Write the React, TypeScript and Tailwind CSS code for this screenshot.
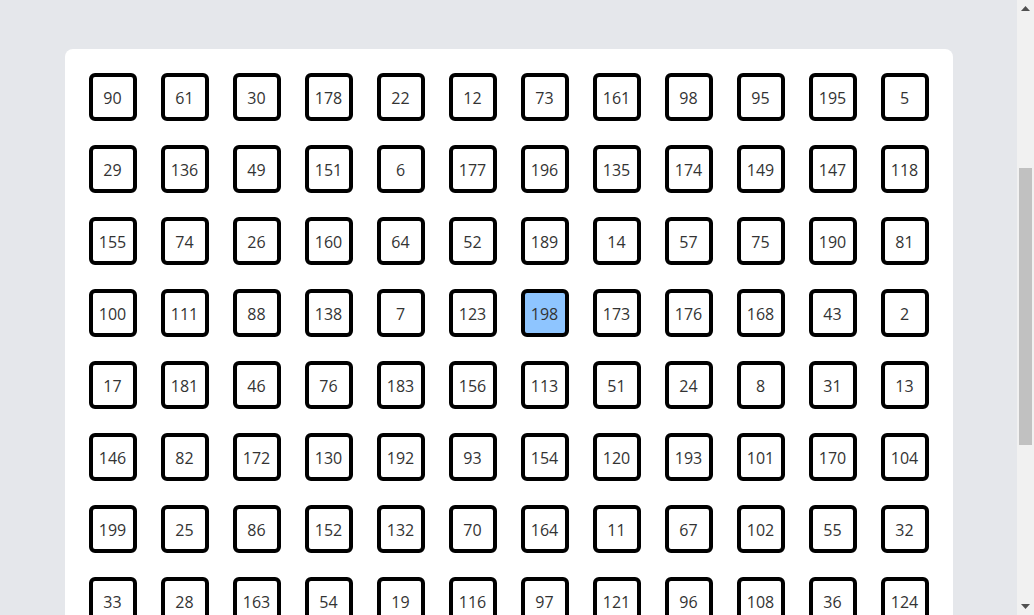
const numbers = [
  90, 61, 30, 178, 22, 12, 73, 161, 98, 95, 195, 5,
  29, 136, 49, 151, 6, 177, 196, 135, 174, 149, 147, 118,
  155, 74, 26, 160, 64, 52, 189, 14, 57, 75, 190, 81,
  100, 111, 88, 138, 7, 123, 198, 173, 176, 168, 43, 2,
  17, 181, 46, 76, 183, 156, 113, 51, 24, 8, 31, 13,
  146, 82, 172, 130, 192, 93, 154, 120, 193, 101, 170, 104,
  199, 25, 86, 152, 132, 70, 164, 11, 67, 102, 55, 32,
  33, 28, 163, 54, 19, 116, 97, 121, 96, 108, 36, 124,
]

const selected = 198

function Scrollbar() {
  return (
    <div className="fixed top-0 right-0 flex h-screen w-[17px] flex-col bg-[#f1f1f1]">
      <div className="flex h-[17px] items-center justify-center">
        <svg width="9" height="5" viewBox="0 0 9 5">
          <path d="M4.5 0 L9 5 L0 5 Z" fill="#505050" />
        </svg>
      </div>
      <div className="flex-1 px-[2px] pt-[151px]">
        <div className="h-[277px] w-[13px] bg-[#c1c1c1]" />
      </div>
      <div className="flex h-[17px] items-center justify-center">
        <svg width="9" height="5" viewBox="0 0 9 5">
          <path d="M0 0 L9 0 L4.5 5 Z" fill="#505050" />
        </svg>
      </div>
    </div>
  )
}

export default function App() {
  return (
    <div className="min-h-screen bg-gray-200 pr-[17px] font-['Open_Sans',sans-serif]">
      <div className="pt-[49px] pb-12">
        <div className="mx-auto w-[888px] rounded-lg bg-white p-6">
          <div className="grid grid-cols-12 gap-6">
            {numbers.map((n) => (
              <div
                key={n}
                className={
                  n === selected
                    ? 'flex h-12 w-12 items-center justify-center rounded-md border-4 border-black bg-blue-300 pt-px text-base text-[#333]'
                    : 'flex h-12 w-12 items-center justify-center rounded-md border-4 border-black bg-white pt-px text-base text-[#333]'
                }
              >
                {n}
              </div>
            ))}
          </div>
        </div>
      </div>
      <Scrollbar />
    </div>
  )
}
